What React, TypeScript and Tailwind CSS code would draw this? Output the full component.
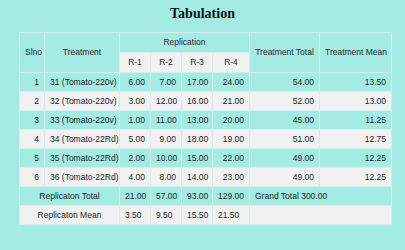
import React from "react";

const rows = [
  [1, "31 (Tomato-220v)", "6.00", "7.00", "17.00", "24.00", "54.00", "13.50"],
  [2, "32 (Tomato-220v)", "3.00", "12.00", "16.00", "21.00", "52.00", "13.00"],
  [3, "33 (Tomato-220v)", "1.00", "11.00", "13.00", "20.00", "45.00", "11.25"],
  [4, "34 (Tomato-22Rd)", "5.00", "9.00", "18.00", "19.00", "51.00", "12.75"],
  [5, "35 (Tomato-22Rd)", "2.00", "10.00", "15.00", "22.00", "49.00", "12.25"],
  [6, "36 (Tomato-22Rd)", "4.00", "8.00", "14.00", "23.00", "49.00", "12.25"],
];

const cell = "border border-[#d6eeeb] px-[5px] h-[19px] leading-none whitespace-nowrap";

export default function App() {
  return (
    <div
      className="w-[405px] h-[250px] bg-[#a4ebe4] text-[#1e1e1e] overflow-hidden"
      style={{ fontFamily: '"Liberation Sans", Arial, sans-serif' }}
    >
      <h1 className="pt-[3px] h-[32px] text-center text-[14px] font-bold text-[#111]" style={{ fontFamily: '"Liberation Serif", serif' }}>
        Tabulation
      </h1>
      <table className="ml-[19px] w-[372px] table-fixed border-collapse text-[8.5px]">
        <colgroup>
          <col className="w-[25px]" />
          <col className="w-[75px]" />
          <col className="w-[31px]" />
          <col className="w-[31px]" />
          <col className="w-[31px]" />
          <col className="w-[37px]" />
          <col className="w-[70px]" />
          <col className="w-[72px]" />
        </colgroup>
        <thead className="text-[#2a2a2a]">
          <tr>
            <th rowSpan={2} className={`${cell} font-normal`}>Slno</th>
            <th rowSpan={2} className={`${cell} font-normal`}>Treatment</th>
            <th colSpan={4} className={`${cell} h-[20px] font-normal`}>Replication</th>
            <th rowSpan={2} className={`${cell} px-[3px] font-normal`}>Treatment Total</th>
            <th rowSpan={2} className={`${cell} px-[3px] font-normal`}>Treatment Mean</th>
          </tr>
          <tr>
            {["R-1", "R-2", "R-3", "R-4"].map((r) => (
              <th key={r} className={`${cell} h-[20px] font-normal bg-[#f1f1f1]`}>{r}</th>
            ))}
          </tr>
        </thead>
        <tbody>
          {rows.map((r, i) => (
            <tr key={r[0]} className={i % 2 ? "bg-[#f1f1f1]" : ""}>
              <td className={`${cell} text-right`}>{r[0]}</td>
              <td className={`${cell} px-[3px] text-left`}>{r[1]}</td>
              {r.slice(2).map((v, j) => (
                <td key={j} className={`${cell} text-right`}>{v}</td>
              ))}
            </tr>
          ))}
          <tr>
            <td colSpan={2} className={`${cell} text-center`}>Replicaton Total</td>
            {["21.00", "57.00", "93.00", "129.00"].map((v) => (
              <td key={v} className={`${cell} text-right`}>{v}</td>
            ))}
            <td colSpan={2} className={`${cell} text-left`}>Grand Total 300.00</td>
          </tr>
          <tr className="bg-[#f1f1f1]">
            <td colSpan={2} className={`${cell} text-center`}>Replicaton Mean</td>
            {["3.50", "9.50", "15.50", "21.50"].map((v) => (
              <td key={v} className={`${cell} text-left`}>{v}</td>
            ))}
            <td colSpan={2} className={cell}></td>
          </tr>
        </tbody>
      </table>
    </div>
  );
}
